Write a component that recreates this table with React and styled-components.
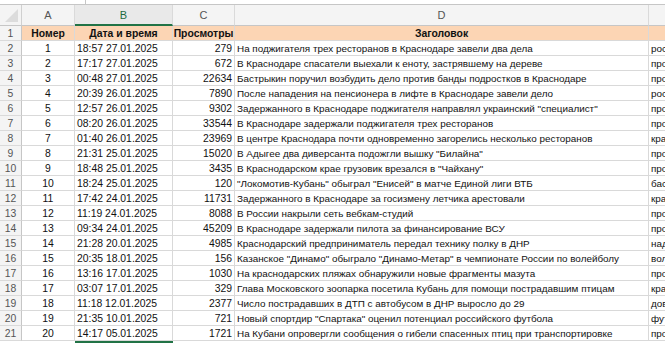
import React from 'react';
import styled, { createGlobalStyle } from 'styled-components';

const GlobalStyle = createGlobalStyle`
  html, body {
    margin: 0;
    padding: 0;
    background: #fff;
    overflow: hidden;
  }
  body {
    font-family: "Liberation Sans", Arial, sans-serif;
  }
`;

const rows = [
  [1, '18:57 27.01.2025', 279, 'На поджигателя трех ресторанов в Краснодаре завели два дела', 'рос'],
  [2, '17:17 27.01.2025', 672, 'В Краснодаре спасатели выехали к еноту, застрявшему на дереве', 'про'],
  [3, '00:48 27.01.2025', 22634, 'Бастрыкин поручил возбудить дело против банды подростков в Краснодаре', 'про'],
  [4, '20:39 26.01.2025', 7890, 'После нападения на пенсионера в лифте в Краснодаре завели дело', 'рос'],
  [5, '12:57 26.01.2025', 9302, 'Задержанного в Краснодаре поджигателя направлял украинский "специалист"', 'про'],
  [6, '08:20 26.01.2025', 33544, 'В Краснодаре задержали поджигателя трех ресторанов', 'про'],
  [7, '01:40 26.01.2025', 23969, 'В центре Краснодара почти одновременно загорелись несколько ресторанов', 'кра'],
  [8, '21:31 25.01.2025', 15020, 'В Адыгее два диверсанта подожгли вышку "Билайна"', 'про'],
  [9, '18:48 25.01.2025', 3435, 'В Краснодарском крае грузовик врезался в "Чайхану"', 'про'],
  [10, '18:24 25.01.2025', 120, '"Локомотив-Кубань" обыграл "Енисей" в матче Единой лиги ВТБ', 'бас'],
  [11, '17:42 24.01.2025', 11731, 'Задержанного в Краснодаре за госизмену летчика арестовали', 'кра'],
  [12, '11:19 24.01.2025', 8088, 'В России накрыли сеть вебкам-студий', 'про'],
  [13, '09:34 24.01.2025', 45209, 'В Краснодаре задержали пилота за финансирование ВСУ', 'про'],
  [14, '21:28 20.01.2025', 4985, 'Краснодарский предприниматель передал технику полку в ДНР', 'над'],
  [15, '20:35 18.01.2025', 156, 'Казанское "Динамо" обыграло "Динамо-Метар" в чемпионате России по волейболу', 'вол'],
  [16, '13:16 17.01.2025', 1030, 'На краснодарских пляжах обнаружили новые фрагменты мазута', 'про'],
  [17, '03:07 17.01.2025', 329, 'Глава Московского зоопарка посетила Кубань для помощи пострадавшим птицам', 'кра'],
  [18, '11:18 12.01.2025', 2377, 'Число пострадавших в ДТП с автобусом в ДНР выросло до 29', 'дов'],
  [19, '21:35 10.01.2025', 721, 'Новый спортдир "Спартака" оценил потенциал российского футбола', 'фут'],
  [20, '14:17 05.01.2025', 1721, 'На Кубани опровергли сообщения о гибели спасенных птиц при транспортировке', 'про'],
];

const columns = ['A', 'B', 'C', 'D', 'E'];

const Sheet = styled.div`
  width: 665px;
  height: 343px;
  overflow: hidden;
  display: flex;
  flex-direction: column;
`;

const FormulaEdge = styled.div`
  height: 4px;
  flex: none;
  border-bottom: 1px solid #c6c6c6;
  display: flex;
`;

const EdgePart = styled.div`
  width: 85px;
  border-right: 1px solid #c6c6c6;
`;

const Grid = styled.div`
  display: grid;
  grid-template-columns: 22px 53px 98px 62px 414px 60px;
  grid-auto-rows: 15px;
  grid-template-rows: 21px;
  font-size: 10.4px;
  color: #111;
`;

const Corner = styled.div`
  position: relative;
  background: #f4f4f4;
  border-right: 1px solid #d0d0d0;
  border-bottom: 1px solid #c6c6c6;
  &::after {
    content: '';
    position: absolute;
    right: 3px;
    bottom: 3px;
    width: 0;
    height: 0;
    border-left: 13px solid transparent;
    border-bottom: 13px solid #dcdcdc;
  }
`;

const ColHead = styled.div`
  box-sizing: border-box;
  background: ${p => (p.$active ? '#e9e9e9' : '#f4f4f4')};
  color: ${p => (p.$active ? '#1e6b3f' : '#555')};
  font-size: 11px;
  display: flex;
  align-items: center;
  justify-content: center;
  border-right: 1px solid #dadada;
  border-bottom: ${p => (p.$active ? '2px solid #217346' : '1px solid #c6c6c6')};
`;

const RowHead = styled.div`
  box-sizing: border-box;
  background: #f4f4f4;
  color: #555;
  font-size: 10.4px;
  display: flex;
  align-items: center;
  justify-content: center;
  border-right: 1px solid #c6c6c6;
  border-bottom: 1px solid #dadada;
`;

const Cell = styled.div`
  box-sizing: border-box;
  display: flex;
  align-items: center;
  justify-content: ${p => p.$align || 'flex-start'};
  padding: 0 2px;
  white-space: nowrap;
  font-size: ${p => (p.$text ? '9.9px' : 'inherit')};
  overflow: ${p => (p.$clip ? 'hidden' : 'visible')};
  border-right: 1px solid #d9d9d9;
  border-bottom: 1px solid #d9d9d9;
  background: ${p => (p.$head ? '#fcd5b4' : '#fff')};
  font-weight: ${p => (p.$head ? 700 : 400)};
`;

const Selection = styled.div`
  position: absolute;
  left: 75px;
  top: 341px;
  width: 98px;
  height: 2px;
  background: #217346;
  z-index: 3;
`;

export default function App() {
  return (
    <Sheet>
      <GlobalStyle />
      <FormulaEdge>
        <EdgePart />
      </FormulaEdge>
      <Grid>
        <Corner />
        {columns.map(c => (
          <ColHead key={c} $active={c === 'B'}>{c}</ColHead>
        ))}

        <RowHead>1</RowHead>
        <Cell $head $align="center">Номер</Cell>
        <Cell $head $align="center">Дата и время</Cell>
        <Cell $head $align="center">Просмотры</Cell>
        <Cell $head $align="center">Заголовок</Cell>
        <Cell $head $clip />

        {rows.map((r, i) => (
          <React.Fragment key={r[0]}>
            <RowHead>{i + 2}</RowHead>
            <Cell $align="center">{r[0]}</Cell>
            <Cell>{r[1]}</Cell>
            <Cell $align="flex-end">{r[2]}</Cell>
            <Cell $clip $text>{r[3]}</Cell>
            <Cell $clip $text>{r[4]}</Cell>
          </React.Fragment>
        ))}
      </Grid>
      <Selection />
    </Sheet>
  );
}
